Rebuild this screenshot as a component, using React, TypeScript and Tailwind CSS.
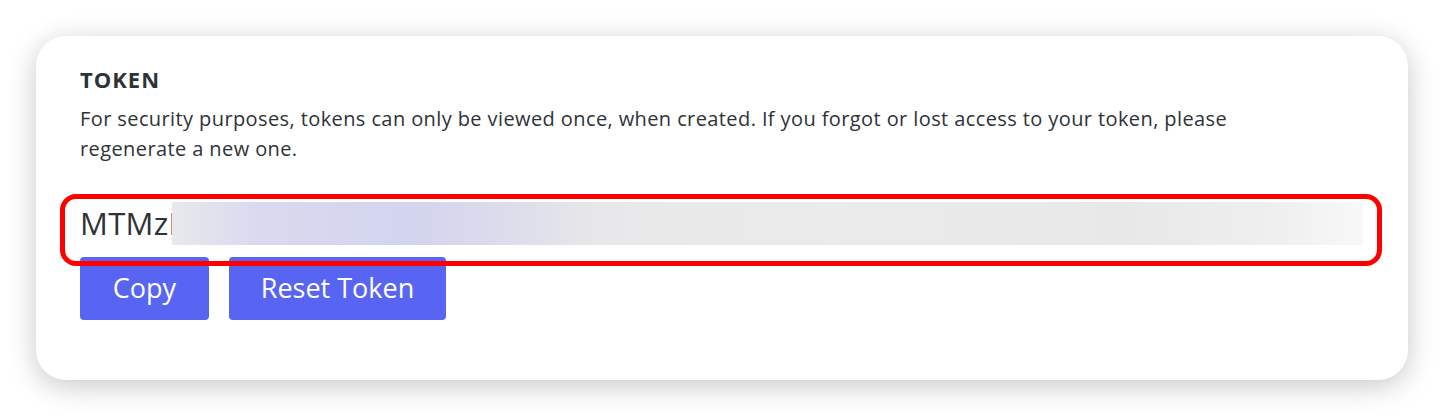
import React from 'react';

export default function App() {
  return (
    <div className="w-[1444px] h-[416px] bg-white p-9 font-['Open_Sans',sans-serif] overflow-hidden">
      <div className="relative h-[344px] w-[1372px] rounded-[30px] bg-white shadow-[0_6px_28px_rgba(0,0,0,0.22)] px-11 pt-[29px]">
        <h2 className="text-[22px] leading-[28px] font-bold tracking-[1px] text-[#2e3338]">TOKEN</h2>
        <p className="mt-[11px] max-w-[1225px] text-[20px] leading-[30px] tracking-[0.4px] text-[#2e3338]">
          For security purposes, tokens can only be viewed once, when created. If you forgot or lost access to your token, please regenerate a new one.
        </p>

        {/* Token field */}
        <div className="mt-[38px] flex h-[43px] items-center">
          <span className="text-[31px] leading-none text-[#2e3338] tracking-[0.3px]">MTMzM</span>
          <div className="relative -ml-[25px] h-[43px] w-[1191px] bg-[linear-gradient(90deg,#e8e8ed_0%,#d9daef_7%,#d3d4ee_20%,#dcdcec_28%,#e8e8ea_36%,#ebebeb_55%,#e8e8e9_80%,#efefef_93%,#f8f8f8_100%)]" />
        </div>

        <div className="mt-[12px] flex gap-5">
          <button className="h-[63px] w-[129px] rounded-[4px] bg-[#5865f2] text-[27px] text-white">Copy</button>
          <button className="h-[63px] w-[217px] rounded-[4px] bg-[#5865f2] text-[27px] text-white">Reset Token</button>
        </div>

        {/* Annotation highlight */}
        <div className="absolute left-[24px] top-[158px] h-[72px] w-[1322px] rounded-[16px] border-[5px] border-[#ff0000]" />
      </div>
    </div>
  );
}
